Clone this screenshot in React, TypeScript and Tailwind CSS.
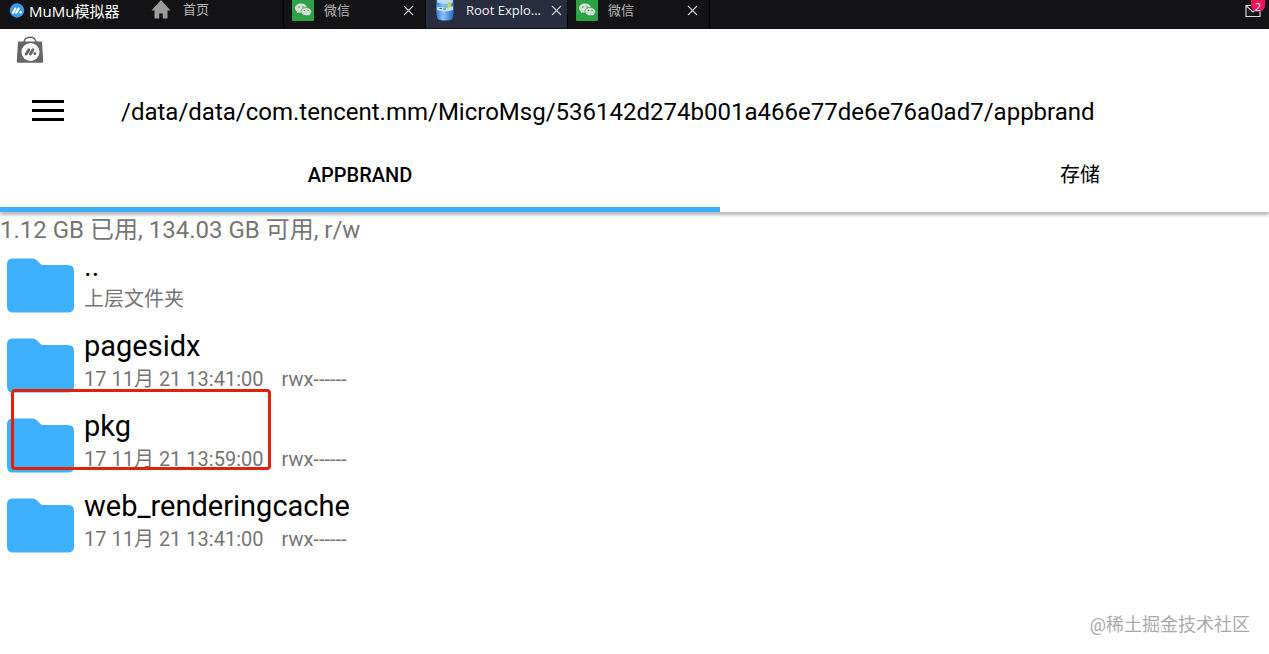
import { X } from 'lucide-react';

interface Entry {
  name: string;
  detail: string;
  permissions?: string;
  marked?: boolean;
}

const entries: Entry[] = [
  { name: '..', detail: '上层文件夹' },
  { name: 'pagesidx', detail: '17 11月 21 13:41:00', permissions: 'rwx------' },
  { name: 'pkg', detail: '17 11月 21 13:59:00', permissions: 'rwx------', marked: true },
  { name: 'web_renderingcache', detail: '17 11月 21 13:41:00', permissions: 'rwx------' },
];

function MuMuLogo() {
  return (
    <svg className="h-4 w-4 shrink-0" viewBox="0 0 16 16" aria-hidden="true">
      <circle cx="8" cy="7.5" r="7.2" fill="#3a9fe8" />
      <path d="M4 9.7L6.4 5.7M7.2 9.7L9.6 5.7" stroke="#fff" strokeWidth="2.2" strokeLinecap="round" />
      <circle cx="11.6" cy="9.3" r="1.2" fill="#fff" />
    </svg>
  );
}

function HomeIcon() {
  return (
    <svg className="h-5 w-5 shrink-0" viewBox="0 0 20 20" fill="#9c9c9c" aria-hidden="true">
      <path d="M10 0L19.5 10.5H16.5V18.5H11.8V13.5H8.2V18.5H3.5V10.5H0.5Z" />
    </svg>
  );
}

function WeChatIcon() {
  return (
    <svg className="h-[22px] w-[22px] shrink-0" viewBox="0 0 22 22" aria-hidden="true">
      <rect y="-1" width="22" height="22" rx="1" fill="#2ba245" />
      <path d="M9 3.4C5.6 3.4 3 5.5 3 8.2C3 9.7 3.8 11 5.1 11.9L4.6 13.6L6.7 12.6C7.4 12.8 8.2 13 9 13C12.4 13 15 10.9 15 8.2C15 5.5 12.4 3.4 9 3.4Z" fill="#d5dfd3" />
      <path d="M14.2 7.4C11.2 7.4 8.9 9.3 8.9 11.6C8.9 14 11.2 15.8 14.2 15.8C14.9 15.8 15.6 15.7 16.2 15.5L18 16.4L17.6 14.9C18.8 14.1 19.5 12.9 19.5 11.6C19.5 9.3 17.2 7.4 14.2 7.4Z" fill="#d5dfd3" stroke="#2ba245" strokeWidth="0.7" />
      <g fill="#2ba245">
        <circle cx="7" cy="7" r="0.8" />
        <circle cx="11" cy="7" r="0.8" />
        <circle cx="12.4" cy="10.4" r="0.7" />
        <circle cx="16" cy="10.4" r="0.7" />
      </g>
    </svg>
  );
}

function RootExplorerIcon() {
  return (
    <svg className="h-[22px] w-[22px] shrink-0" viewBox="0 0 22 22" aria-hidden="true">
      <defs>
        <linearGradient id="barrel" x1="0" x2="1">
          <stop offset="0" stopColor="#2f78d8" />
          <stop offset="0.4" stopColor="#8cc4fa" />
          <stop offset="1" stopColor="#1f62c4" />
        </linearGradient>
      </defs>
      <path d="M2.5 0H19.5C20.3 6 20.3 13 18.5 18.5C17.5 21.3 4.5 21.3 3.5 18.5C1.7 13 1.7 6 2.5 0Z" fill="url(#barrel)" />
      <path d="M3 0H19L18.6 2.6C14 4.4 8 4.4 3.4 2.6Z" fill="#b9dcfa" />
      <path d="M3 6.5C8 8 14 8 19 6.5V10C14 11.8 8 11.8 3 10Z" fill="#c4e1fb" />
      <path d="M5.5 8.5H8M9 9H12" stroke="#4f7f5a" strokeWidth="1.2" />
      <path d="M14.5 1L15.6 3.4L18.4 2.6L17 5L18.8 7L16 6.8L14.4 9L13.8 6.4L11.2 5.6L13.7 4.2Z" fill="#c9d262" />
    </svg>
  );
}

function StoreIcon() {
  return (
    <svg className="h-7 w-7" viewBox="0 0 28 28" aria-hidden="true">
      <path d="M8 6C8.5 3 11 1.2 14 1.2S19.5 3 20 6" fill="none" stroke="#666" strokeWidth="1.5" />
      <path d="M3 5.5H25C25.6 5.5 26 6 26.1 6.5L27.2 25.8C27.2 26.4 26.7 26.8 26 26.8H2C1.3 26.8 0.8 26.4 0.8 25.8L1.9 6.5C2 6 2.4 5.5 3 5.5Z" fill="#666" />
      <circle cx="14.5" cy="16" r="9" fill="#fff" />
      <path d="M10.3 17.9L12.8 13.7M14.4 17.9L16.9 13.7" stroke="#666" strokeWidth="2.9" strokeLinecap="round" />
      <circle cx="18.9" cy="17.5" r="1.5" fill="#666" />
    </svg>
  );
}

function FolderIcon() {
  return (
    <svg className="h-14 w-[68px] shrink-0" viewBox="0 0 68 56" aria-hidden="true">
      <path
        d="M6.5 0.5H27Q29 0.5 30.5 2L34.5 6Q35.5 7 37 7H62Q68 7 68 13V48.5Q68 54.5 62 54.5H7Q1 54.5 1 48.5V6.5Q1 0.5 6.5 0.5Z"
        fill="#3db0ff"
      />
    </svg>
  );
}

function WindowTab({ title, icon, active }: { title: string; icon: React.ReactNode; active?: boolean }) {
  return (
    <div
      className={`flex h-7 w-[142px] items-start border-l border-black pl-2 ${
        active ? 'bg-[#272d3f] pr-0.5 text-[#f0f0f0]' : 'pr-2 text-[#b8b8b8]'
      }`}
    >
      {icon}
      <button className="ml-2.5 text-left text-[13px] leading-5 whitespace-nowrap">{title}</button>
      <button aria-label={`关闭 ${title}`} className="ml-auto shrink-0 pt-0.5 text-[#d0d0d0]">
        <X size={17} strokeWidth={1.5} />
      </button>
    </div>
  );
}

function EntryRow({ entry }: { entry: Entry }) {
  return (
    <li className="relative flex h-20 items-center gap-2.5 pl-1.5">
      <FolderIcon />
      <button className="flex flex-col items-start pb-1.5 text-left">
        <span className="text-[29px] leading-8 text-black">{entry.name}</span>
        <span className="flex gap-[18px] text-[20px] leading-[34px] text-[#757575]">
          <span>{entry.detail}</span>
          {entry.permissions && <span>{entry.permissions}</span>}
        </span>
      </button>
      {entry.marked && (
        <span className="pointer-events-none absolute -top-[17px] left-[11px] h-[81px] w-[260px] rounded-sm border-3 border-[#e02208]" />
      )}
    </li>
  );
}

export default function App() {
  return (
    <div className="relative min-h-screen overflow-hidden bg-white font-[Roboto,'Noto_Sans_CJK_SC',sans-serif] text-black">
      <header className="flex h-[29px] items-start bg-[#131315] font-['Open_Sans','Noto_Sans_CJK_SC',sans-serif]">
        <div className="flex h-[22px] w-[141px] items-center gap-1 pl-[9px] text-[15px] text-white">
          <MuMuLogo />
          <span className="whitespace-nowrap">MuMu模拟器</span>
        </div>
        <button className="flex h-5 w-[142px] items-center gap-3 pl-2.5 text-[13px] text-[#b8b8b8]">
          <HomeIcon />
          首页
        </button>
        <WindowTab title="微信" icon={<WeChatIcon />} />
        <WindowTab title="Root Explo..." icon={<RootExplorerIcon />} active />
        <WindowTab title="微信" icon={<WeChatIcon />} />
        <div className="h-7 border-l border-black" />
        <button aria-label="消息" className="relative mt-1 mr-2 ml-auto">
          <svg className="h-4 w-4" viewBox="0 0 16 16" fill="none" stroke="#d8d8d8" strokeWidth="1.2" aria-hidden="true">
            <path d="M1 1.5H15V12.5H1ZM1 1.5L8 8L15 1.5" />
          </svg>
          <span className="absolute -top-1 -right-1 flex h-3 w-[14px] items-center justify-center rounded-t-md rounded-b-full bg-[#f0145a] text-[11px] leading-none text-white">
            2
          </span>
        </button>
      </header>

      <div className="flex h-[47px] items-start px-4 pt-[7px]">
        <StoreIcon />
      </div>

      <div className="flex h-[68px] items-center pl-8">
        <button aria-label="菜单" className="flex w-8 flex-col gap-1.5">
          <span className="h-[3px] bg-black" />
          <span className="h-[3px] bg-black" />
          <span className="h-[3px] bg-black" />
        </button>
        <h1 className="ml-[57px] pt-1 text-[24px] leading-8 whitespace-nowrap">
          /data/data/com.tencent.mm/MicroMsg/536142d274b001a466e77de6e76a0ad7/appbrand
        </h1>
      </div>

      {/* The second tab runs past the right edge */}
      <nav className="flex h-[68px] shadow-[0_3px_3px_rgba(0,0,0,0.28)]">
        <button className="w-[56.74%] shrink-0 border-b-5 border-[#3db0ff] pb-0.5 text-[20px] font-medium">APPBRAND</button>
        <button className="w-[56.74%] shrink-0 border-b-5 border-transparent pb-0.5 text-[20px]">存储</button>
      </nav>

      <main>
        <p className="h-[34px] pt-0.5 text-[24px] leading-8 text-[#757575]">1.12 GB 已用, 134.03 GB 可用, r/w</p>
        <ul>
          {entries.map((entry) => (
            <EntryRow key={entry.name} entry={entry} />
          ))}
        </ul>
      </main>

      <p className="absolute right-[19px] bottom-[15px] text-[18px] leading-7 text-[#aaa]">@稀土掘金技术社区</p>
    </div>
  );
}
